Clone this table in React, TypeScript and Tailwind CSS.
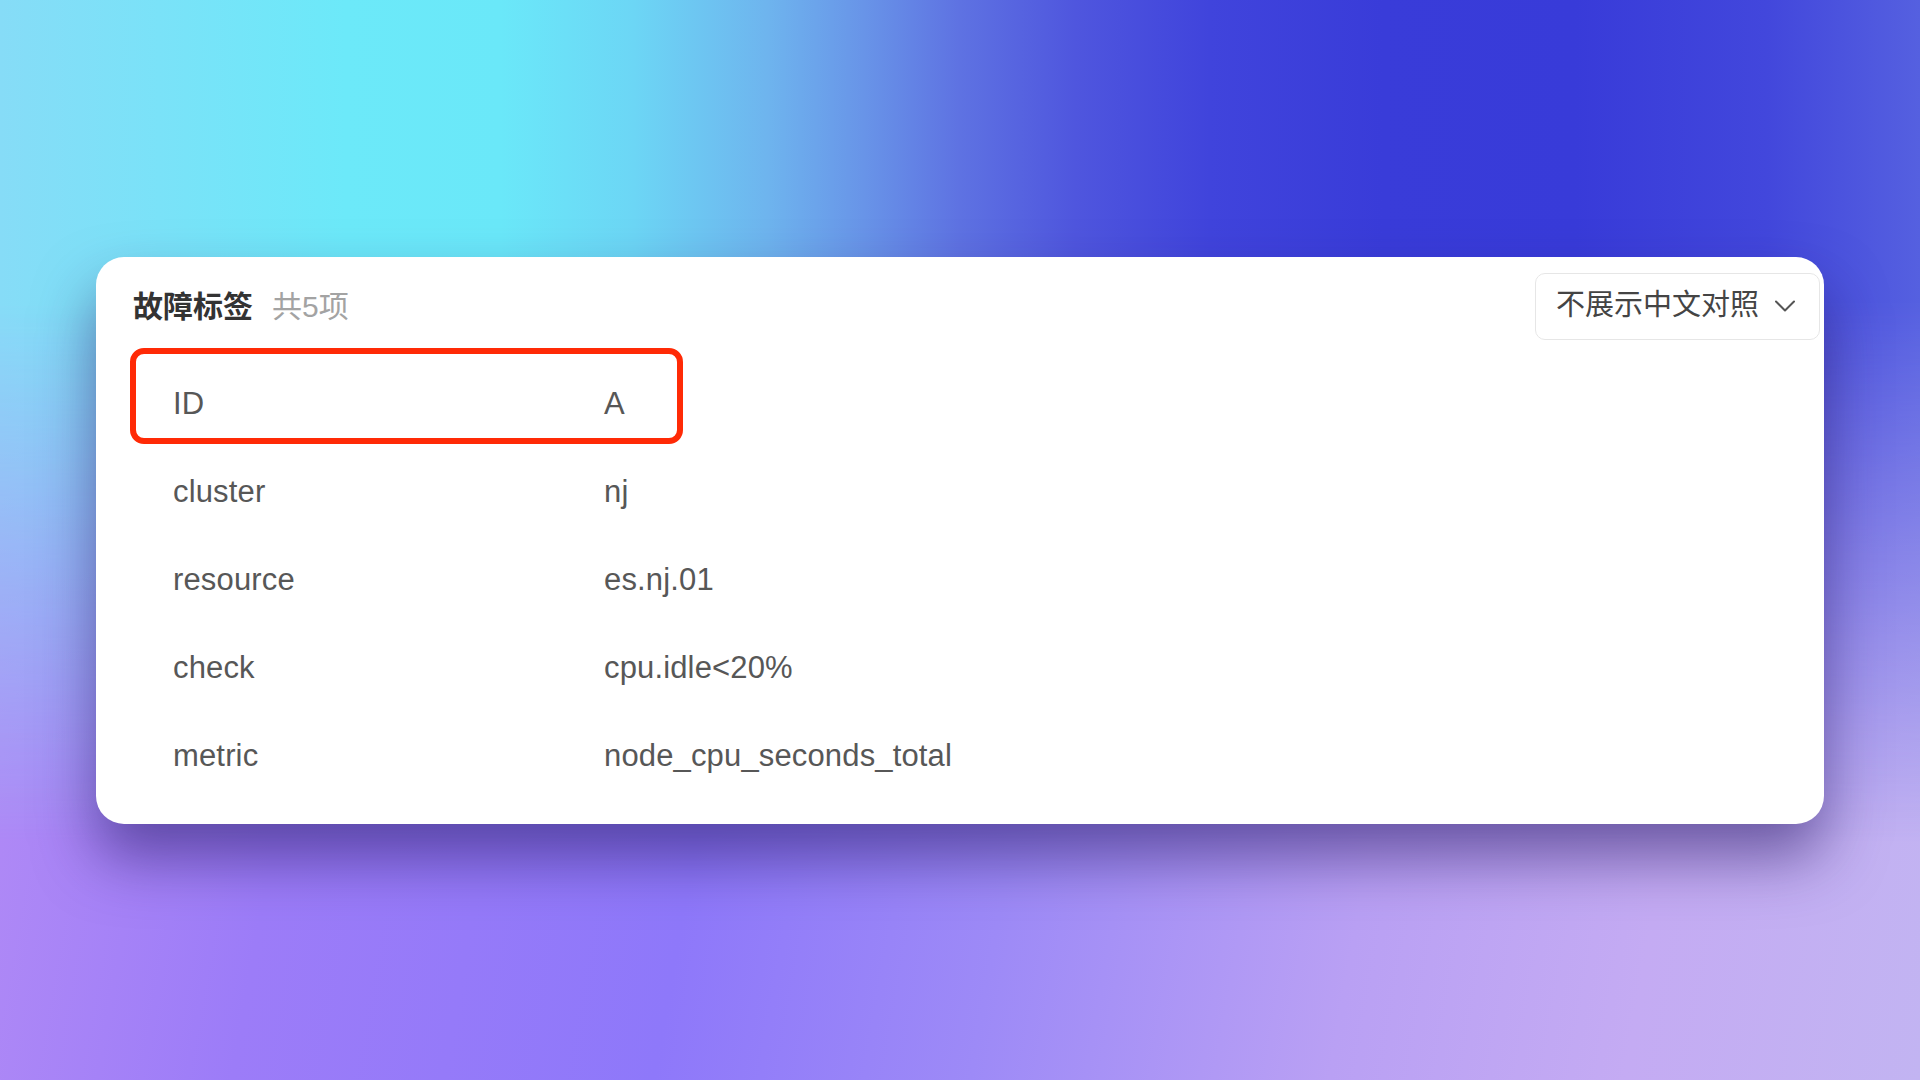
import React from 'react';

const rows = [
  { key: 'ID', value: 'A' },
  { key: 'cluster', value: 'nj' },
  { key: 'resource', value: 'es.nj.01' },
  { key: 'check', value: 'cpu.idle<20%' },
  { key: 'metric', value: 'node_cpu_seconds_total' },
];

function ChevronDown() {
  return (
    <svg width="22" height="14" viewBox="0 0 22 14" fill="none" className="shrink-0">
      <path d="M2 2.5 L11 11.5 L20 2.5" stroke="#555" strokeWidth="2" strokeLinecap="round" strokeLinejoin="round" />
    </svg>
  );
}

function LabelRow({ label, value, highlight }: { label: string; value: string; highlight?: boolean }) {
  return (
    <div className="relative flex items-center h-[88px] pl-[42px] text-[31px] tracking-[0.15px] text-[#575757] font-['Liberation_Sans','Noto_Sans_CJK_SC',sans-serif]">
      <span className="w-[431px] shrink-0">{label}</span>
      <span>{value}</span>
      {highlight && (
        <div className="absolute left-[-1px] top-[-13px] w-[553px] h-[96px] border-[6px] border-[#ff2a06] rounded-[14px]" />
      )}
    </div>
  );
}

export default function App() {
  return (
    <div className="relative w-full h-screen overflow-hidden flex items-center justify-center bg-[image:linear-gradient(100deg,#b88ff5_0%,#9c7cf8_20%,#8e78fa_40%,#9d8af7_55%,#b9a0f4_72%,#c4abf3_86%,#c2b4f2_100%)]">
      {/* top colour band, fades into the purple below */}
      <div className="absolute inset-0 bg-[image:linear-gradient(90deg,#86dcf7_0%,#6ce9f9_18%,#6ae8f9_26%,#6cd6f5_33%,#6eb4ee_40%,#6894e8_45%,#5e72e2_50%,#4f56de_56%,#4044dc_63%,#393cd9_72%,#383bd9_82%,#4247dc_92%,#5560e0_100%)] [mask-image:linear-gradient(to_bottom,black_0%,black_28%,transparent_78%)]" />

      <div className="relative w-[1728px] h-[567px] bg-white rounded-[28px] overflow-hidden shadow-[0_34px_60px_rgba(40,25,100,0.55)] flex flex-col px-[35px] pr-[4px]">
        <div className="flex items-center justify-between mt-[16px] h-[67px]">
          <div className="flex items-center gap-[19px] pl-[2px] text-[30px] font-['Liberation_Sans','Noto_Sans_CJK_SC',sans-serif]">
            <span className="font-bold text-[#333]">故障标签</span>
            <span className="text-[#a3a3a3]">共5项</span>
          </div>
          <button className="flex items-center gap-[15px] h-[67px] pl-[20px] pr-[23px] border-[1.5px] border-[#e6e6e6] rounded-[10px] bg-white text-[29px] text-[#444] font-['Liberation_Sans','Noto_Sans_CJK_SC',sans-serif]">
            <span>不展示中文对照</span>
            <ChevronDown />
          </button>
        </div>

        <div className="mt-[21px] flex flex-col">
          {rows.map((r, i) => (
            <LabelRow key={r.key} label={r.key} value={r.value} highlight={i === 0} />
          ))}
        </div>
      </div>
    </div>
  );
}
